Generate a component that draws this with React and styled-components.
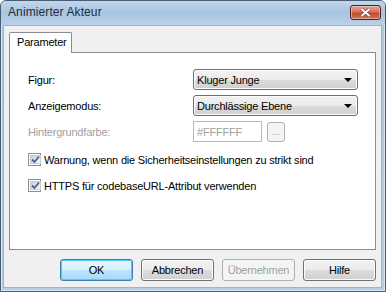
import React from "react";
import styled, { createGlobalStyle, css } from "styled-components";

const Global = createGlobalStyle`
  html, body { margin: 0; padding: 0; background: #ffffff; }
  body { font-family: "Liberation Sans", Arial, sans-serif; font-size: 11px; letter-spacing: -0.2px; color: #000; }
  * { box-sizing: border-box; }
`;

const Window = styled.div`
  width: 386px;
  height: 292px;
  display: flex;
  flex-direction: column;
  border: 1px solid #4b5d72;
  border-radius: 6px 6px 0 0;
  background: linear-gradient(180deg, #bcd3ea 0%, #aac6e2 10%, #b5cde7 100%);
  box-shadow: inset 0 0 0 1px #d8e6f4;
  overflow: hidden;
`;

const TitleBar = styled.div`
  height: 24px;
  flex: none;
  display: flex;
  align-items: center;
  justify-content: space-between;
  padding: 0 4px 2px 7px;
  background: linear-gradient(180deg, #c2d7ec 0%, #a9c5e1 45%, #b9d0e8 100%);
`;

const Title = styled.span`
  font-family: "Liberation Sans", Arial, sans-serif;
  font-size: 12px;
  letter-spacing: 0.1px;
  color: #1e2d3c;
`;

const CloseButton = styled.div`
  width: 31px;
  height: 15px;
  margin-top: 1px;
  border: 1px solid #5b1f1a;
  border-radius: 3px;
  background: linear-gradient(180deg, #e8a496 0%, #d6735f 45%, #c24a31 55%, #d0755e 100%);
  box-shadow: inset 0 0 0 1px rgba(255, 220, 210, 0.5);
  display: flex;
  align-items: center;
  justify-content: center;
`;

const Body = styled.div`
  flex: 1;
  margin: 0 3px 3px 2px;
  background: #f0f0f0;
  border: 1px solid #a0b4c8;
  display: flex;
  flex-direction: column;
  padding: 6px 5px 0 5px;
`;

const TabStrip = styled.div`
  display: flex;
  height: 21px;
  position: relative;
  z-index: 1;
`;

const Tab = styled.div`
  width: 63px;
  height: 21px;
  padding: 3px 0 0 7px;
  background: #ffffff;
  border: 1px solid #898c95;
  border-bottom: none;
  border-radius: 2px 2px 0 0;
`;

const Panel = styled.div`
  height: 198px;
  margin-top: -1px;
  background: #ffffff;
  border: 1px solid #898c95;
  padding: 16px 0 0 18px;
  display: flex;
  flex-direction: column;
`;

const Row = styled.div`
  display: flex;
  align-items: center;
  height: 21px;
  margin-bottom: ${(p) => p.$gap ?? 5}px;
`;

const Label = styled.div`
  width: 165px;
  color: ${(p) => (p.$disabled ? "#a0a0a0" : "#000")};
`;

const Combo = styled.div`
  width: 165px;
  height: 21px;
  border: 1px solid #707070;
  border-radius: 3px;
  background: linear-gradient(180deg, #f2f2f2 0%, #ebebeb 50%, #dddddd 51%, #cfcfcf 100%);
  box-shadow: inset 0 0 0 1px #fcfcfc;
  display: flex;
  align-items: center;
  justify-content: space-between;
  padding: 0 5px 0 3px;
`;

const Arrow = styled.div`
  width: 0;
  height: 0;
  border-left: 4px solid transparent;
  border-right: 4px solid transparent;
  border-top: 4px solid #000;
`;

const TextBox = styled.div`
  width: 69px;
  height: 21px;
  border: 1px solid #b7babf;
  background: #ffffff;
  color: #a0a0a0;
  display: flex;
  align-items: center;
  padding-left: 3px;
`;

const SmallButton = styled.div`
  width: 18px;
  height: 20px;
  margin-left: 5px;
  border: 1px solid #adb2b5;
  border-radius: 3px;
  background: #f4f4f4;
  color: #a0a0a0;
  font-size: 9px;
  display: flex;
  align-items: flex-end;
  justify-content: center;
  padding-bottom: 4px;
`;

const CheckRow = styled.div`
  display: flex;
  align-items: center;
  height: 13px;
  gap: 3px;
  margin-top: ${(p) => p.$top}px;
`;

const Box = styled.div`
  width: 13px;
  height: 13px;
  border: 1px solid #8e8f8f;
  background: #ffffff;
  padding: 1px;
  display: flex;
`;

const BoxInner = styled.div`
  flex: 1;
  background: linear-gradient(135deg, #cbcfd5 0%, #f6f6f6 100%);
  border: 1px solid #c9ccd1;
  display: flex;
  align-items: center;
  justify-content: center;
`;

const Footer = styled.div`
  display: flex;
  justify-content: flex-end;
  gap: 8px;
  padding: 9px 0 0 0;
`;

const Button = styled.div`
  width: 73px;
  height: 22px;
  border: 1px solid #707070;
  border-radius: 3px;
  background: linear-gradient(180deg, #f2f2f2 0%, #ebebeb 50%, #dddddd 51%, #cfcfcf 100%);
  box-shadow: inset 0 0 0 1px #fcfcfc;
  display: flex;
  align-items: center;
  justify-content: center;
  color: #000;
  ${(p) =>
    p.$default &&
    css`
      border-color: #3c7fb1;
      background: linear-gradient(180deg, #eaf6fd 0%, #d9f0fc 50%, #bee6fd 51%, #a7d9f5 100%);
      box-shadow: inset 0 0 0 1px #48d0fb;
    `}
  ${(p) =>
    p.$disabled &&
    css`
      border-color: #adb2b5;
      background: #f4f4f4;
      box-shadow: none;
      color: #a0a0a0;
    `}
`;

const Check = () => (
  <svg width="9" height="9" viewBox="0 0 9 9">
    <path d="M1 4.5 L3.5 7 L8 1.5" fill="none" stroke="#4a5f97" strokeWidth="1.8" />
  </svg>
);

export default function App() {
  return (
    <>
      <Global />
      <Window>
        <TitleBar>
          <Title>Animierter Akteur</Title>
          <CloseButton>
            <svg width="11" height="9" viewBox="0 0 11 9">
              <path d="M1.5 1 L9.5 8 M9.5 1 L1.5 8" stroke="#7a3a30" strokeWidth="3.2" />
              <path d="M1.5 1 L9.5 8 M9.5 1 L1.5 8" stroke="#ffffff" strokeWidth="2" />
            </svg>
          </CloseButton>
        </TitleBar>
        <Body>
          <TabStrip>
            <Tab>Parameter</Tab>
          </TabStrip>
          <Panel>
            <Row>
              <Label>Figur:</Label>
              <Combo>
                Kluger Junge
                <Arrow />
              </Combo>
            </Row>
            <Row>
              <Label>Anzeigemodus:</Label>
              <Combo>
                Durchlässige Ebene
                <Arrow />
              </Combo>
            </Row>
            <Row $gap={0}>
              <Label $disabled>Hintergrundfarbe:</Label>
              <TextBox>#FFFFFF</TextBox>
              <SmallButton>...</SmallButton>
            </Row>
            <CheckRow $top={11}>
              <Box>
                <BoxInner>
                  <Check />
                </BoxInner>
              </Box>
              Warnung, wenn die Sicherheitseinstellungen zu strikt sind
            </CheckRow>
            <CheckRow $top={13}>
              <Box>
                <BoxInner>
                  <Check />
                </BoxInner>
              </Box>
              HTTPS für codebaseURL-Attribut verwenden
            </CheckRow>
          </Panel>
          <Footer>
            <Button $default>OK</Button>
            <Button>Abbrechen</Button>
            <Button $disabled>Übernehmen</Button>
            <Button>Hilfe</Button>
          </Footer>
        </Body>
      </Window>
    </>
  );
}
